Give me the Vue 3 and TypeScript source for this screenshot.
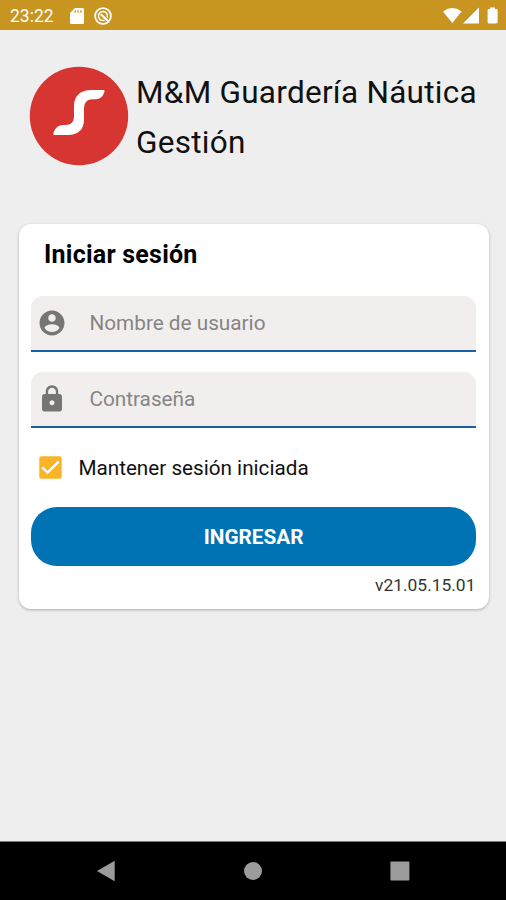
<script setup lang="ts">
import { ref } from 'vue'

const username = ref('')
const password = ref('')
const keepSession = ref(true)
</script>

<template>
  <div class="screen">
    <header class="status-bar">
      <span class="clock">23:22</span>
      <svg class="sd-icon" width="14" height="16" viewBox="0 0 14 16">
        <path d="M5 0H12.5Q14 0 14 1.5V14.5Q14 16 12.5 16H1.5Q0 16 0 14.5V5Z" fill="#fff" />
        <path d="M5.3 2.2V4.8M8.1 2.2V4.8M10.9 2.2V4.8" stroke="#c79520" stroke-width="1.3" />
      </svg>
      <svg class="sync-icon" width="18" height="18" viewBox="0 0 18 18" fill="none" stroke="#fff">
        <circle cx="9" cy="9" r="7.9" stroke-width="1.8" />
        <path d="M10.5 13.2A4.5 4.5 0 1 1 13.2 10.5" stroke-width="1.5" />
        <path d="M6.8 7.2L14.2 14.2" stroke-width="2.2" />
      </svg>
      <svg class="signal-icons" width="56" height="18" viewBox="0 0 56 18" fill="#fff">
        <path d="M0 4.4Q9.3 -2.4 18.6 4.4L9.3 16Z" />
        <path d="M36 0.5V16.5H20Z" />
        <path d="M47.2 2V.4H52V2H53.2Q54.6 2 54.6 3.4V15.1Q54.6 16.5 53.2 16.5H46Q44.6 16.5 44.6 15.1V3.4Q44.6 2 46 2Z" />
      </svg>
    </header>

    <main class="content">
      <div class="brand">
        <svg class="logo" width="100" height="100" viewBox="0 0 100 100">
          <circle cx="50" cy="50" r="49.2" fill="#d63531" />
          <path d="M75 24H62C51 24 45 30.5 45 40V50C45 56 42 59 36.5 59H34C29 59 25.8 62.5 24.3 67.5Q24 69 25.5 69H39C49 69 55 63.5 55 54V43C55 36.5 58 33.3 64 33.3H66C71 33.3 74.2 30.5 75.5 25.5Q75.8 24 75 24Z" fill="#fff" />
        </svg>
        <h1 class="title">M&amp;M Guardería Náutica <br />Gestión</h1>
      </div>

      <form class="card" @submit.prevent>
        <h2 class="card-title"><span>Iniciar sesión</span></h2>

        <label class="field">
          <svg class="field-icon" width="30" height="30" viewBox="0 0 24 24" fill="#757575">
            <path d="M12 2C6.48 2 2 6.48 2 12s4.48 10 10 10 10-4.48 10-10S17.52 2 12 2zm0 3c1.66 0 3 1.34 3 3s-1.34 3-3 3-3-1.34-3-3 1.34-3 3-3zm0 14.2c-2.5 0-4.71-1.28-6-3.22.03-1.99 4-3.08 6-3.08 1.99 0 5.97 1.09 6 3.08-1.29 1.94-3.5 3.22-6 3.22z" />
          </svg>
          <input v-model="username" class="user-input" type="text" placeholder="Nombre de usuario" />
        </label>

        <label class="field">
          <svg class="field-icon" width="30" height="30" viewBox="0 0 24 24" fill="#757575">
            <path d="M18 8h-1V6c0-2.76-2.24-5-5-5S7 3.24 7 6v2H6c-1.1 0-2 .9-2 2v10c0 1.1.9 2 2 2h12c1.1 0 2-.9 2-2V10c0-1.1-.9-2-2-2zm-6 9c-1.1 0-2-.9-2-2s.9-2 2-2 2 .9 2 2-.9 2-2 2zm3.1-9H8.9V6c0-1.71 1.39-3.1 3.1-3.1 1.71 0 3.1 1.39 3.1 3.1v2z" />
          </svg>
          <input v-model="password" class="pass-input" type="password" placeholder="Contraseña" />
        </label>

        <label class="keep">
          <input v-model="keepSession" class="keep-input" type="checkbox" />
          <svg width="23" height="23" viewBox="0 0 23 23">
            <rect x=".3" y=".3" width="22.4" height="22.4" rx="2" fill="#f9b428" />
            <path v-if="keepSession" d="M3.2 11.4L8.6 16.6L19.6 5.6" fill="none" stroke="#fff" stroke-width="2.4" />
          </svg>
          <span class="keep-text">Mantener sesión iniciada</span>
        </label>

        <button class="submit" type="submit"><span>INGRESAR</span></button>
        <p class="version"><span>v21.05.15.01</span></p>
      </form>
    </main>

    <nav class="nav-bar">
      <svg width="18" height="22" viewBox="0 0 18 22"><path d="M0 11L17.7 .7V21.3Z" fill="#9c9c9c" /></svg>
      <svg width="18" height="18" viewBox="0 0 18 18"><circle cx="9" cy="9" r="9" fill="#9c9c9c" /></svg>
      <svg width="20" height="20" viewBox="0 0 20 20"><rect x=".4" y=".4" width="19" height="19" rx="1" fill="#9c9c9c" /></svg>
    </nav>
  </div>
</template>

<style>
body {
  margin: 0;
}
</style>

<style scoped>
.screen {
  display: flex;
  flex-direction: column;
  width: 506px;
  height: 900px;
  overflow: hidden;
  background: #eeeeee;
  color: #111;
  font-family: Roboto, "Liberation Sans", sans-serif;
}
.status-bar {
  display: flex;
  align-items: center;
  box-sizing: border-box;
  height: 30px;
  padding: 1px 7px 0 10px;
  background: #c79520;
}
.clock {
  width: 59.5px;
  color: #fff;
  font-size: 17.5px;
  line-height: 30px;
}
.sync-icon {
  margin-left: 10px;
}
.signal-icons {
  margin-left: auto;
}
.content {
  flex: 1;
}
.brand {
  display: flex;
  gap: 7px;
  height: 193.5px;
  box-sizing: border-box;
  padding: 36px 0 0 29px;
}
.logo {
  flex: none;
}
.title {
  margin: 2px 0 0;
  font-size: 31.5px;
  font-weight: 400;
  line-height: 50px;
  letter-spacing: 0.27px;
  white-space: nowrap;
}
.card {
  box-sizing: border-box;
  width: 469.5px;
  height: 385px;
  margin: 0 0 0 19px;
  padding: 15px 12.6px 0 12.4px;
  border-radius: 12px;
  background: #fff;
  box-shadow: 0 1px 3px rgba(0, 0, 0, 0.28);
}
.card-title {
  margin: 0 0 25px 12.6px;
  color: #000;
  font-size: 25px;
  font-weight: 700;
  line-height: 32px;
  letter-spacing: 0.24px;
}
.field {
  display: flex;
  align-items: center;
  box-sizing: border-box;
  height: 56.5px;
  margin-bottom: 19.5px;
  padding-left: 5.5px;
  border-bottom: 2.5px solid #195fa8;
  border-radius: 12px 12px 0 0;
  background: #f2eeed;
}
.field-icon {
  flex: none;
}
.field input {
  flex: 1;
  min-width: 0;
  margin-left: 22.5px;
  padding: 0;
  border: 0;
  outline: 0;
  background: transparent;
  font: 400 20.75px/30px Roboto, "Liberation Sans", sans-serif;
}
.field input::placeholder {
  color: #858585;
  opacity: 1;
}
.keep {
  display: flex;
  align-items: center;
  height: 40px;
  padding-left: 8px;
  font-size: 20.7px;
}
.keep-input {
  position: absolute;
  opacity: 0;
}
.keep-text {
  margin-left: 16px;
}
.submit {
  display: block;
  width: 444.5px;
  height: 59px;
  margin: 19px 0 0;
  padding: 0;
  border: 0;
  border-radius: 26px;
  background: #0073b4;
  color: #fff;
  font: 700 20.75px/61px Roboto, "Liberation Sans", sans-serif;
}
.version {
  margin: 8px 0.5px 0 0;
  color: #333;
  font-size: 17.4px;
  line-height: 22px;
  text-align: right;
}
.nav-bar {
  display: grid;
  grid-template-columns: repeat(3, 146.7px);
  justify-content: center;
  justify-items: center;
  align-items: center;
  box-sizing: border-box;
  height: 59px;
  border-top: 1px solid #777;
  background: #000;
}
</style>
